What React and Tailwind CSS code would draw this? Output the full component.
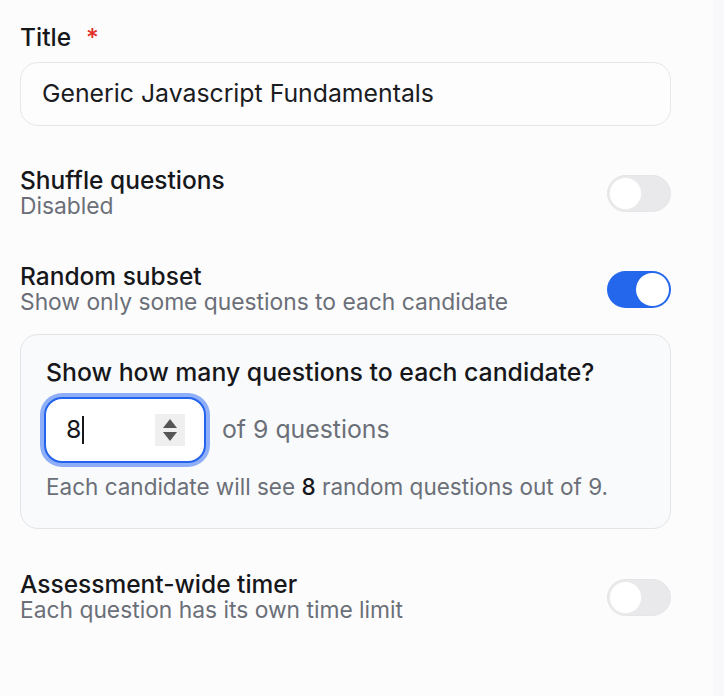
import { useState } from 'react';

function Toggle({ on }) {
  return (
    <div
      className={`w-[64px] h-[37px] rounded-full p-[2px] flex shrink-0 ${
        on ? 'bg-[#2467ec] justify-end' : 'bg-[#e9e9eb] justify-start border border-[#e6e6e8]'
      }`}
    >
      <div
        className={`h-full aspect-square rounded-full bg-white ${on ? '' : 'shadow-[0_0_0_1px_#ececee]'}`}
      />
    </div>
  );
}

function SettingRow({ title, subtitle, on }) {
  return (
    <div className="flex items-center justify-between">
      <div className="flex flex-col">
        <span className="text-[24.5px] leading-[26px] font-medium text-[#16171a]">{title}</span>
        <span className="text-[22.8px] leading-[26px] text-[#6b6f78]">{subtitle}</span>
      </div>
      <Toggle on={on} />
    </div>
  );
}

export default function App() {
  const [count] = useState(8);
  const total = 9;

  return (
    <div
      className="w-[724px] h-[696px] bg-[#fcfcfd] flex"
      style={{ fontFamily: 'Inter, "Noto Sans", sans-serif' }}
    >
      <div className="w-[652px] pl-[20px] pt-[23px] flex flex-col">
        {/* Title field */}
        <label className="text-[24.5px] leading-[28px] font-medium text-[#16171a] flex gap-[15px]">
          Title <span className="text-[#e0312b]">*</span>
        </label>
        <div className="mt-[11px] h-[64px] w-[651px] rounded-[18px] border border-[#e6e7ea] bg-[#fdfdfe] flex items-center px-[21px]">
          <span className="text-[24.8px] text-[#1b1c1f]">Generic Javascript Fundamentals</span>
        </div>

        <div className="mt-[41px] w-[651px]">
          <SettingRow title="Shuffle questions" subtitle="Disabled" on={false} />
        </div>

        <div className="mt-[44px] w-[651px]">
          <SettingRow
            title="Random subset"
            subtitle="Show only some questions to each candidate"
            on
          />
        </div>

        {/* Subset panel */}
        <div className="mt-[19px] w-[651px] h-[195px] rounded-[18px] border border-[#e3e4e7] bg-[#f9fafb] px-[25px] pt-[23px]">
          <div className="text-[24.8px] leading-[28px] font-medium text-[#16171a]">
            Show how many questions to each candidate?
          </div>
          <div className="mt-[7px] flex items-center gap-[12px]">
            <div className="w-[170px] h-[74px] rounded-[22px] bg-[#8eaff7] p-[4px] -ml-[6px]">
              <div className="w-full h-full rounded-[18px] border-2 border-[#2463eb] bg-white flex items-center pl-[20px] pr-[19px]">
                <span className="text-[24.8px] text-[#16171a]">{count}</span>
                <span className="w-[2px] h-[28px] bg-[#16171a] ml-[1px]" />
                <div className="ml-auto w-[30px] h-[32px] bg-[#efefef] flex flex-col items-center justify-center gap-[4px]">
                  <svg width="14" height="9" viewBox="0 0 14 9">
                    <path d="M7 0 L14 9 L0 9 Z" fill="#555" />
                  </svg>
                  <svg width="14" height="9" viewBox="0 0 14 9">
                    <path d="M0 0 L14 0 L7 9 Z" fill="#555" />
                  </svg>
                </div>
              </div>
            </div>
            <span className="text-[24.8px] text-[#6b6f78]">of {total} questions</span>
          </div>
          <p className="mt-[6px] text-[22.5px] leading-[28px] text-[#6b6f78]">
            Each candidate will see <span className="text-[#16171a] font-medium">{count}</span> random
            questions out of {total}.
          </p>
        </div>

        <div className="mt-[42px] w-[651px]">
          <SettingRow
            title="Assessment-wide timer"
            subtitle="Each question has its own time limit"
            on={false}
          />
        </div>
      </div>
      <div className="ml-auto w-[11px] h-full bg-[#f8f8fa]" />
    </div>
  );
}
